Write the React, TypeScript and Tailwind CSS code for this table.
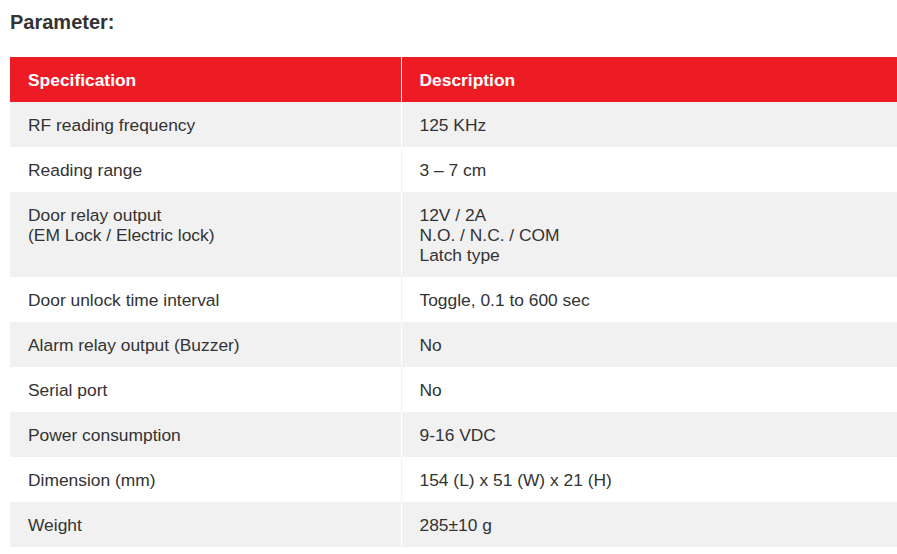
const rows: { spec: string[]; desc: string[] }[] = [
  { spec: ["RF reading frequency"], desc: ["125 KHz"] },
  { spec: ["Reading range"], desc: ["3 – 7 cm"] },
  { spec: ["Door relay output", "(EM Lock / Electric lock)"], desc: ["12V / 2A", "N.O. / N.C. / COM", "Latch type"] },
  { spec: ["Door unlock time interval"], desc: ["Toggle, 0.1 to 600 sec"] },
  { spec: ["Alarm relay output (Buzzer)"], desc: ["No"] },
  { spec: ["Serial port"], desc: ["No"] },
  { spec: ["Power consumption"], desc: ["9-16 VDC"] },
  { spec: ["Dimension (mm)"], desc: ["154 (L) x 51 (W) x 21 (H)"] },
  { spec: ["Weight"], desc: ["285±10 g"] },
];

function Lines({ lines }: { lines: string[] }) {
  return (
    <>
      {lines.map((l) => (
        <div key={l}>{l}</div>
      ))}
    </>
  );
}

export default function App() {
  return (
    <div className="w-[897px] h-[554px] overflow-hidden bg-white pl-[10px] font-['Liberation_Sans',Arial,sans-serif] text-[#333]">
      <h3 className="mt-[10px] h-[24px] text-[20px] leading-[24px] font-bold text-[#333]">Parameter:</h3>
      <table className="mt-[23px] w-[900px] border-collapse text-[17.4px] leading-[20px]">
        <thead>
          <tr className="bg-[#ed1c24] text-left text-white">
            <th className="w-[391px] border-r border-white px-[18px] py-[12.5px] font-bold">Specification</th>
            <th className="px-[18px] py-[12.5px] font-bold">Description</th>
          </tr>
        </thead>
        <tbody>
          {rows.map((r, i) => (
            <tr key={r.spec[0]} className={i % 2 === 0 ? "bg-[#f1f1f1]" : "bg-white"}>
              <td
                className={
                  "border-r px-[18px] py-[12.5px] align-top " +
                  (i % 2 === 0 ? "border-white" : "border-[#f1f1f1]")
                }
              >
                <Lines lines={r.spec} />
              </td>
              <td className="px-[18px] py-[12.5px] align-top">
                <Lines lines={r.desc} />
              </td>
            </tr>
          ))}
        </tbody>
      </table>
    </div>
  );
}
